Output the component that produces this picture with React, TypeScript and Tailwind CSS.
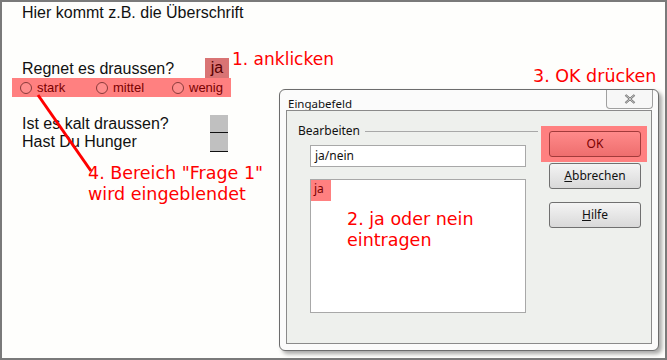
import React from "react";

const arial = { fontFamily: '"Liberation Sans", Arial, sans-serif' };
const dejavu = { fontFamily: '"DejaVu Sans", sans-serif' };

function Radio({ label, last }: { label: string; last?: boolean }) {
  return (
    <div className={last ? "shrink-0 flex items-center gap-[5px]" : "shrink-0 w-[76px] flex items-center gap-[5px]"}>
      <span className="w-[12px] h-[12px] rounded-full border border-[#8a3a3a] bg-[#ff8c8c]" />
      <span className="text-[13px] leading-none text-[#7a0000]">{label}</span>
    </div>
  );
}

function Btn({ children, red }: { children: React.ReactNode; red?: boolean }) {
  return (
    <div
      className={
        red
          ? "w-[92px] h-[26px] rounded-[3px] border border-[#a23b3b] bg-gradient-to-b from-[#ff8a8a] to-[#ee6e6e] flex items-center justify-center text-[12px] text-[#7a0000]"
          : "w-[92px] h-[26px] rounded-[3px] border border-[#707070] bg-gradient-to-b from-[#f4f4f4] to-[#d9d9d9] flex items-center justify-center text-[12px] text-[#111]"
      }
    >
      {children}
    </div>
  );
}

export default function App() {
  return (
    <div
      className="relative w-[667px] h-[360px] bg-[#fefefc] border-2 border-[#7a7a7a] overflow-hidden"
      style={arial}
    >
      {/* left form content */}
      <div className="pl-[20px] pt-[2px] text-[16px] text-[#111]">
        <div className="leading-[18px]">Hier kommt z.B. die Überschrift</div>
        <div className="mt-[36px] flex items-end w-[207px] justify-between">
          <span className="leading-[18px]">Regnet es draussen?</span>
          <span className="w-[24px] h-[20px] bg-[#d97474] text-[#5a0000] flex items-center justify-center leading-none">ja</span>
        </div>
        <div className="ml-[-10px] w-[219px] h-[19px] bg-[#ff8080] flex items-center pl-[8px]">
          <Radio label="stark" />
          <Radio label="mittel" />
          <Radio label="wenig" last />
        </div>
        <div className="mt-[18px] flex w-[206px] justify-between">
          <div className="leading-[18px]">
            <div>Ist es kalt draussen?</div>
            <div>Hast Du Hunger</div>
          </div>
          <div className="w-[18px] bg-[#c0c0c0] flex flex-col">
            <div className="h-[18px] border-b border-[#111]" />
            <div className="h-[19px] border-b border-[#111]" />
          </div>
        </div>
      </div>

      {/* red line */}
      <svg className="absolute left-0 top-0" width="667" height="360">
        <line x1="36" y1="93" x2="89" y2="169" stroke="#ff0000" strokeWidth="3" />
      </svg>

      {/* annotations */}
      <div className="absolute left-[230px] top-[47px] text-[17px] text-[#ff0000] leading-[20px]" style={dejavu}>
        1. anklicken
      </div>
      <div className="absolute left-[86px] top-[161px] text-[17.5px] text-[#ff0000] leading-[21px]" style={dejavu}>
        <div>4. Bereich "Frage 1"</div>
        <div>wird eingeblendet</div>
      </div>
      <div className="absolute left-[531px] top-[64px] text-[17.5px] text-[#ff0000] leading-[20px]" style={dejavu}>
        3. OK drücken
      </div>

      {/* dialog window */}
      <div
        className="absolute left-[277px] top-[87px] w-[380px] h-[262px] rounded-[6px] border border-[#6c6c6c] bg-[#fbfbfb] shadow-[3px_3px_4px_rgba(0,0,0,0.35)] flex flex-col px-[6px] pb-[6px]"
        style={{ fontFamily: '"Noto Sans", "DejaVu Sans", sans-serif' }}
      >
        <div className="h-[20px] flex items-start justify-between">
          <span className="text-[11.5px] text-[#111] mt-[5px] ml-[2px]">Eingabefeld</span>
          <div className="w-[47px] h-[19px] mr-[-1px] border border-t-0 border-[#a0a0a0] rounded-b-[4px] bg-[#f7f7f7] flex items-center justify-center">
            <svg width="12" height="10" viewBox="0 0 12 10">
              <path d="M1.5 1 L10.5 9 M10.5 1 L1.5 9" stroke="#6a6a6a" strokeWidth="2.2" />
              <path d="M1.5 1 L10.5 9 M10.5 1 L1.5 9" stroke="#e6e6e6" strokeWidth="0.8" />
            </svg>
          </div>
        </div>
        <div className="flex-1 border border-[#8a8a8a] bg-[#eef0ed] flex pl-[11px] pt-[12px]">
          <div className="w-[240px]">
            <div className="flex items-center gap-[5px]">
              <span className="text-[12px] text-[#111] leading-[16px]">Bearbeiten</span>
              <div className="flex-1 h-px bg-[#a8a8a8]" />
            </div>
            <div className="ml-[12px] mt-[6px] w-[216px] h-[22px] bg-white border border-[#a8a8a8] flex items-center pl-[4px] text-[12px] text-[#111]">
              ja/nein
            </div>
            <div className="ml-[12px] mt-[12px] w-[216px] h-[134px] bg-white border border-[#a8a8a8] relative">
              <div className="w-[20px] h-[21px] bg-[#ff8080] text-[12px] text-[#7a0000] pl-[3px] leading-[18px]">ja</div>
              <div className="absolute left-[36px] top-[29px] text-[17.5px] text-[#ff0000] leading-[21px]" style={dejavu}>
                <div>2. ja oder nein</div>
                <div>eintragen</div>
              </div>
            </div>
          </div>
          <div className="ml-[11px] mt-[3px] flex flex-col items-start">
            <div className="bg-[#ff8080] pl-[8px] pr-[6px] py-[5px] ml-[-8px]">
              <Btn red>OK</Btn>
            </div>
            <div className="mt-[1px]">
              <Btn>
                <span><u>A</u>bbrechen</span>
              </Btn>
            </div>
            <div className="mt-[13px]">
              <Btn>
                <span><u>H</u>ilfe</span>
              </Btn>
            </div>
          </div>
        </div>
      </div>
    </div>
  );
}
